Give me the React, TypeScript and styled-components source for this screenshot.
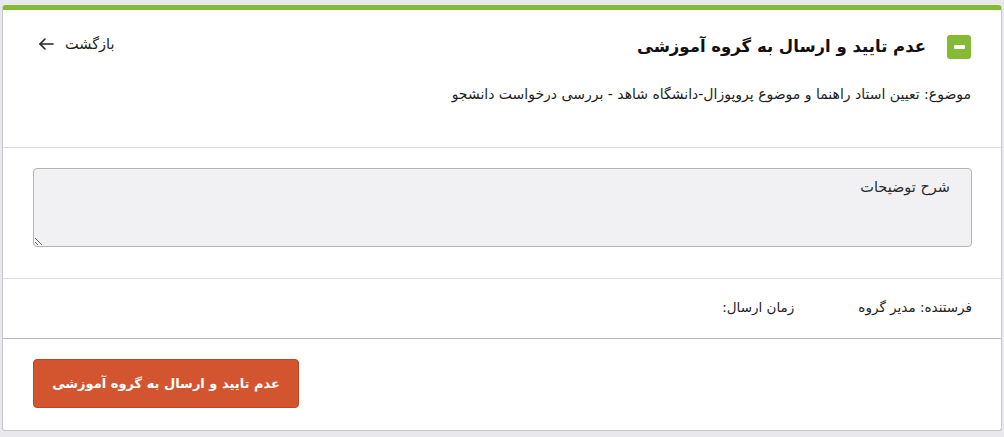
import styled, { createGlobalStyle } from "styled-components";

const GlobalStyle = createGlobalStyle`
    html, body {
        margin: 0;
        padding: 0;
        background-color: #e8e8ed;
        font-family: "DejaVu Sans", "Noto Sans", sans-serif;
    }
    * {
        box-sizing: border-box;
    }
`;

function App() {
    return (
        <>
            <GlobalStyle />
            <Page>
                <Card dir="rtl">
                    <HeaderSection>
                        <HeaderTop>
                            <TitleGroup>
                                <CollapseBox>
                                    <CollapseBar />
                                </CollapseBox>
                                <TitleText>عدم تایید و ارسال به گروه آموزشی</TitleText>
                            </TitleGroup>
                            <BackLink href="#">
                                بازگشت
                                <svg width="16" height="14" viewBox="0 0 16 14" fill="none" stroke="#222" strokeWidth="1.6" strokeLinecap="round" strokeLinejoin="round">
                                    <path d="M15 7H2" />
                                    <path d="M7 2L2 7l5 5" />
                                </svg>
                            </BackLink>
                        </HeaderTop>
                        <SubjectText>موضوع: تعیین استاد راهنما و موضوع پروپوزال-دانشگاه شاهد - بررسی درخواست دانشجو</SubjectText>
                    </HeaderSection>

                    <TextareaSection>
                        <DescriptionArea placeholder="شرح توضیحات" />
                    </TextareaSection>

                    <InfoRow>
                        <InfoItem>فرستنده: مدیر گروه</InfoItem>
                        <InfoItem>زمان ارسال:</InfoItem>
                    </InfoRow>

                    <FooterSection>
                        <RejectButton type="button">عدم تایید و ارسال به گروه آموزشی</RejectButton>
                    </FooterSection>
                </Card>
            </Page>
        </>
    );
}

const Page = styled.div`
    padding: 5px 2px 5px 2px;
`;

const Card = styled.div`
    background-color: #ffffff;
    border: 1px solid #c6c6ce;
    border-top: 5px solid #84bb35;
    border-radius: 4px 4px 3px 3px;
    color: #1e1e1e;
`;

const HeaderSection = styled.div`
    padding: 22px 30px 45px 35px;
    border-bottom: 1px solid #dcdce2;
`;

const HeaderTop = styled.div`
    display: flex;
    align-items: flex-start;
    justify-content: space-between;
`;

const TitleGroup = styled.div`
    display: flex;
    align-items: center;
    gap: 21px;
`;

const CollapseBox = styled.div`
    width: 24px;
    height: 24px;
    border-radius: 3px;
    background-color: #85b936;
    display: flex;
    align-items: center;
    justify-content: center;
`;

const CollapseBar = styled.span`
    width: 11px;
    height: 4px;
    background-color: #ffffff;
    border-radius: 1px;
`;

const TitleText = styled.h2`
    margin: 0;
    font-size: 16.5px;
    font-weight: 700;
    color: #111;
    line-height: 30px;
`;

const BackLink = styled.a`
    display: flex;
    align-items: center;
    gap: 11px;
    font-size: 14.5px;
    color: #1e1e1e;
    text-decoration: none;
    margin-top: 4px;
`;

const SubjectText = styled.p`
    margin: 24px 0 0 0;
    font-size: 14px;
    color: #1e1e1e;
`;

const TextareaSection = styled.div`
    padding: 20px 29px 31px 30px;
    border-bottom: 1px solid #dcdce2;
`;

const DescriptionArea = styled.textarea`
    display: block;
    width: 100%;
    height: 79px;
    background-color: #f1f1f3;
    border: 1px solid #b4b4ba;
    border-radius: 4px;
    padding: 10px 21px;
    font-family: "DejaVu Sans", "Noto Sans", sans-serif;
    font-size: 14.5px;
    color: #222;
    resize: vertical;
    &::placeholder {
        color: #2a2a2a;
    }
`;

const InfoRow = styled.div`
    display: flex;
    gap: 64px;
    padding: 0 29px;
    height: 60px;
    align-items: center;
    border-bottom: 1px solid #b9b9c0;
`;

const InfoItem = styled.span`
    font-size: 13.5px;
    color: #1e1e1e;
    margin-top: -3px;
`;

const FooterSection = styled.div`
    display: flex;
    justify-content: flex-end;
    padding: 20px 30px 22px 30px;
`;

const RejectButton = styled.button`
    width: 266px;
    height: 49px;
    background-color: #d3552f;
    border: 1px solid #bf4424;
    border-radius: 4px;
    color: #ffffff;
    font-family: "DejaVu Sans", "Noto Sans", sans-serif;
    font-size: 13px;
    font-weight: 700;
    cursor: pointer;
`;

export default App;
